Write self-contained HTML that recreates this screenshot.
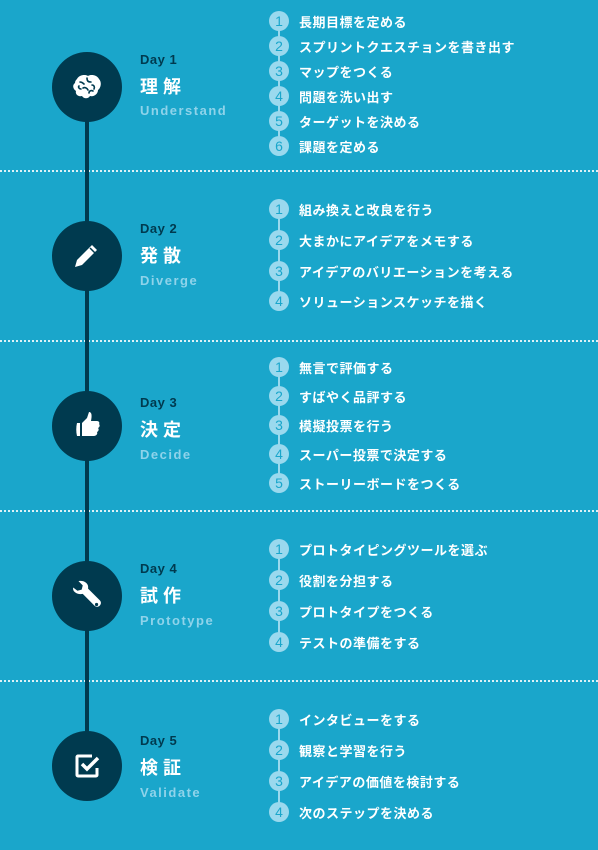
<!DOCTYPE html>
<html><head><meta charset="utf-8"><style>
*{margin:0;padding:0;box-sizing:border-box}
body{width:598px;height:850px;background:#1aa6cb;position:relative;overflow:hidden;font-family:"Liberation Sans","Noto Sans CJK JP",sans-serif;font-weight:bold}
.dot{position:absolute;left:0;width:598px;height:2px;background:repeating-linear-gradient(90deg,rgba(255,255,255,.85) 0 2px,transparent 2px 4px)}
.vline{position:absolute;left:85px;width:4px;top:90px;height:676px;background:#003a4f}
.c{position:absolute;left:52px;width:70px;height:70px;border-radius:50%;background:#003a4f;display:flex;align-items:center;justify-content:center}
.day{position:absolute;left:140px;font-size:13px;color:#003a4f;line-height:16px;letter-spacing:.5px}
.ti{position:absolute;left:140px;font-size:18px;color:#fff;line-height:20px;letter-spacing:5px}
.en{position:absolute;left:140px;font-size:13px;color:#8fd3ea;line-height:16px;letter-spacing:1.5px}
.it{position:absolute;left:269px;height:20px;display:flex;align-items:center;font-size:13px;letter-spacing:.5px;color:#fff}
.n{width:20px;height:20px;border-radius:50%;background:#9ad9ee;color:#1aa6cb;font-weight:normal;font-size:14px;letter-spacing:0;display:flex;align-items:center;justify-content:center;margin-right:10px;flex:none}
.cl{position:absolute;left:278px;width:2px;background:#9ad9ee}
</style></head><body>
<div class="dot" style="top:170px"></div>
<div class="dot" style="top:340px"></div>
<div class="dot" style="top:510px"></div>
<div class="dot" style="top:680px"></div>
<div class="vline"></div>

<div class="c" style="top:52px"><svg width="32" height="28" viewBox="0 0 32 28"><path d="M6 6c2-4 8-5 11-3 3-2 9-1 11 3 3 3 2 9-1 11 0 4-4 7-8 6-2 3-6 3-8 0-4 1-7-2-6-5-3-2-4-6-1-8 0-2 1-3 2-4z" fill="#fff"/><path d="M9 9c2 0 3 1 4 2M16 5c0 3 1 4 4 4M21 12c2 0 3 2 2 4M12 15c2-1 4 0 5 2M8 13c-1 1 0 3 2 3M18 20c0-2 2-3 4-2" stroke="#003a4f" stroke-width="1.6" fill="none" stroke-linecap="round"/></svg></div>
<div class="c" style="top:221px"><svg width="32" height="32" viewBox="0 0 32 32"><path d="M21 5l5 5-15 15-7 2 2-7z" fill="#fff"/><path d="M19 8l5 5" stroke="#003a4f" stroke-width="1.5"/></svg></div>
<div class="c" style="top:391px"><svg width="30" height="30" viewBox="0 0 30 30"><path d="M5 12h3v13H5c-1-4-1-9 0-13z" fill="#fff"/><path d="M10 12l5-5 2-6c3 0 3 4 2 9h6c2 0 3 2 2 3 1 1 1 3-1 4 1 1 1 3-1 4 1 2-1 4-3 4H10z" fill="#fff"/></svg></div>
<div class="c" style="top:561px"><svg width="34" height="34" viewBox="0 0 32 32"><path d="M3 8l4 3 4-1 1-4-4-4c5-1 10 2 9 7l11 11c1.5 1.5 1.5 3.5 0 5s-3.5 1.5-5 0L12 14c-5 1-10-2-9-6z" fill="#fff"/><circle cx="25" cy="24" r="1.5" fill="#003a4f"/></svg></div>
<div class="c" style="top:731px"><svg width="30" height="30" viewBox="0 0 30 30"><path d="M20 5H6a1 1 0 0 0-1 1v18a1 1 0 0 0 1 1h18a1 1 0 0 0 1-1v-7" stroke="#fff" stroke-width="3" fill="none"/><path d="M10 13l5 5 11-11" stroke="#fff" stroke-width="3.5" fill="none"/></svg></div>

<div class="day" style="top:52px">Day 1</div><div class="ti" style="top:77px">理解</div><div class="en" style="top:103px">Understand</div>
<div class="day" style="top:221px">Day 2</div><div class="ti" style="top:246px">発散</div><div class="en" style="top:273px">Diverge</div>
<div class="day" style="top:395px">Day 3</div><div class="ti" style="top:420px">決定</div><div class="en" style="top:447px">Decide</div>
<div class="day" style="top:561px">Day 4</div><div class="ti" style="top:586px">試作</div><div class="en" style="top:613px">Prototype</div>
<div class="day" style="top:733px">Day 5</div><div class="ti" style="top:758px">検証</div><div class="en" style="top:785px">Validate</div>

<div class="cl" style="top:21px;height:125px"></div>
<div class="cl" style="top:209px;height:92px"></div>
<div class="cl" style="top:367px;height:116px"></div>
<div class="cl" style="top:549px;height:93px"></div>
<div class="cl" style="top:719px;height:93px"></div>

<div class="it" style="top:11px"><span class="n">1</span>長期目標を定める</div>
<div class="it" style="top:36px"><span class="n">2</span>スプリントクエスチョンを書き出す</div>
<div class="it" style="top:61px"><span class="n">3</span>マップをつくる</div>
<div class="it" style="top:86px"><span class="n">4</span>問題を洗い出す</div>
<div class="it" style="top:111px"><span class="n">5</span>ターゲットを決める</div>
<div class="it" style="top:136px"><span class="n">6</span>課題を定める</div>

<div class="it" style="top:199px"><span class="n">1</span>組み換えと改良を行う</div>
<div class="it" style="top:230px"><span class="n">2</span>大まかにアイデアをメモする</div>
<div class="it" style="top:261px"><span class="n">3</span>アイデアのバリエーションを考える</div>
<div class="it" style="top:291px"><span class="n">4</span>ソリューションスケッチを描く</div>

<div class="it" style="top:357px"><span class="n">1</span>無言で評価する</div>
<div class="it" style="top:386px"><span class="n">2</span>すばやく品評する</div>
<div class="it" style="top:415px"><span class="n">3</span>模擬投票を行う</div>
<div class="it" style="top:444px"><span class="n">4</span>スーパー投票で決定する</div>
<div class="it" style="top:473px"><span class="n">5</span>ストーリーボードをつくる</div>

<div class="it" style="top:539px"><span class="n">1</span>プロトタイピングツールを選ぶ</div>
<div class="it" style="top:570px"><span class="n">2</span>役割を分担する</div>
<div class="it" style="top:601px"><span class="n">3</span>プロトタイプをつくる</div>
<div class="it" style="top:632px"><span class="n">4</span>テストの準備をする</div>

<div class="it" style="top:709px"><span class="n">1</span>インタビューをする</div>
<div class="it" style="top:740px"><span class="n">2</span>観察と学習を行う</div>
<div class="it" style="top:771px"><span class="n">3</span>アイデアの価値を検討する</div>
<div class="it" style="top:802px"><span class="n">4</span>次のステップを決める</div>
</body></html>
